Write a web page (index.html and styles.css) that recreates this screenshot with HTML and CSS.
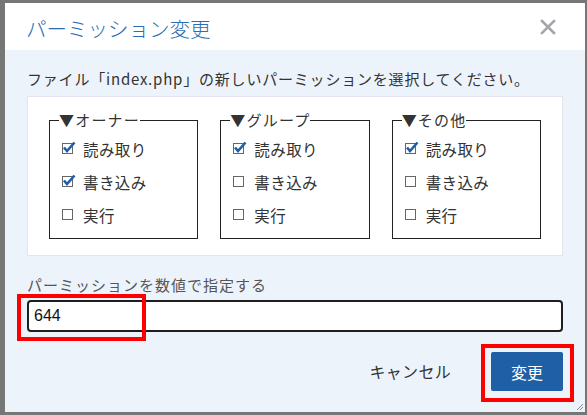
FILE: index.html
```html
<!DOCTYPE html>
<html lang="ja">
<head>
<meta charset="utf-8">
<link rel="stylesheet" href="styles.css">
</head>
<body>
<div class="page">
  <div class="dialog">
    <div class="header">
      <div class="title">パーミッション変更</div>
      <svg class="close" width="16" height="16" viewBox="0 0 16 16"><path d="M2 2 L14 14 M14 2 L2 14" stroke="#a3a5a8" stroke-width="2.6" stroke-linecap="square"/></svg>
    </div>
    <div class="content">
      <div class="desc">ファイル「index.php」の新しいパーミッションを選択してください。</div>
      <div class="panel">
        <fieldset class="group">
          <legend>▼オーナー</legend>
          <div class="row"><span class="cb on"><svg width="14" height="13" viewBox="0 0 14 13"><path d="M2 6.5 L5 10 L12.5 1.5" fill="none" stroke="#1d5ea8" stroke-width="2.6"/></svg></span>読み取り</div>
          <div class="row"><span class="cb on"><svg width="14" height="13" viewBox="0 0 14 13"><path d="M2 6.5 L5 10 L12.5 1.5" fill="none" stroke="#1d5ea8" stroke-width="2.6"/></svg></span>書き込み</div>
          <div class="row"><span class="cb"></span>実行</div>
        </fieldset>
        <fieldset class="group">
          <legend>▼グループ</legend>
          <div class="row"><span class="cb on"><svg width="14" height="13" viewBox="0 0 14 13"><path d="M2 6.5 L5 10 L12.5 1.5" fill="none" stroke="#1d5ea8" stroke-width="2.6"/></svg></span>読み取り</div>
          <div class="row"><span class="cb"></span>書き込み</div>
          <div class="row"><span class="cb"></span>実行</div>
        </fieldset>
        <fieldset class="group">
          <legend>▼その他</legend>
          <div class="row"><span class="cb on"><svg width="14" height="13" viewBox="0 0 14 13"><path d="M2 6.5 L5 10 L12.5 1.5" fill="none" stroke="#1d5ea8" stroke-width="2.6"/></svg></span>読み取り</div>
          <div class="row"><span class="cb"></span>書き込み</div>
          <div class="row"><span class="cb"></span>実行</div>
        </fieldset>
      </div>
      <div class="label">パーミッションを数値で指定する</div>
      <div class="input">644</div>
      <div class="actions">
        <div class="cancel">キャンセル</div>
        <div class="ok">変更</div>
      </div>
    </div>
    <svg class="grip" width="8" height="8" viewBox="0 0 8 8"><path d="M7 1 L1 7 M7 4 L4 7" stroke="#888" stroke-width="1"/></svg>
  </div>
  <div class="mark mark-input"></div>
  <div class="mark mark-ok"></div>
</div>
</body>
</html>
```
FILE: styles.css
```css
html, body {
  margin: 0;
  padding: 0;
}
body {
  background: #767676;
  font-family: "Noto Sans CJK JP", "Noto Sans", sans-serif;
  color: #333;
}
.page {
  position: relative;
  width: 587px;
  height: 415px;
  overflow: hidden;
  padding-top: 3px;
  box-sizing: border-box;
}
.dialog {
  position: relative;
  margin-left: 5px;
  width: 580px;
  height: 409px;
  background: #edf3fb;
  display: flex;
  flex-direction: column;
}
.header {
  height: 47px;
  background: #fff;
  display: flex;
  align-items: center;
  justify-content: space-between;
  padding: 0 29px 0 21px;
  box-sizing: border-box;
}
.title {
  font-size: 20.5px;
  color: #2a6db3;
  line-height: 28px;
  margin-top: 2px;
  font-weight: 300;
}
.close {
  display: block;
}
.content {
  padding: 18px 22px 0 22px;
  display: flex;
  flex-direction: column;
}
.desc {
  font-size: 15px;
  line-height: 22px;
  color: #333;
  letter-spacing: 0.8px;
  white-space: nowrap;
}
.panel {
  margin-top: 6px;
  background: #fff;
  border: 1px solid #e1e6ee;
  padding: 13px 21px 16px;
  display: flex;
  gap: 22px;
}
.group {
  flex: 1;
  margin: 0;
  border: 1px solid #222;
  padding: 2px 0 7px 12px;
  min-width: 0;
}
.group legend {
  padding: 0;
  margin-left: -3px;
  font-size: 15px;
  line-height: 20px;
  letter-spacing: 1.2px;
  color: #333;
}
.row {
  height: 33px;
  display: flex;
  align-items: center;
  font-size: 15.5px;
  letter-spacing: 0.4px;
  color: #333;
}
.cb {
  position: relative;
  width: 9px;
  height: 9px;
  border: 1px solid #666;
  background: #fff;
  margin-right: 10px;
  flex: none;
}
.cb svg {
  position: absolute;
  left: -1px;
  top: -3px;
}
.label {
  margin-top: 19px;
  font-size: 15px;
  line-height: 20px;
  letter-spacing: 1px;
  color: #555;
}
.input {
  margin-top: 5px;
  height: 32px;
  box-sizing: border-box;
  border: 2px solid #1e1e1e;
  border-radius: 4px;
  background: #fff;
  padding: 0 5px;
  display: flex;
  align-items: center;
  font-family: "Liberation Sans", Arial, sans-serif;
  font-size: 16px;
  color: #111;
}
.actions {
  margin-top: 20px;
  display: flex;
  justify-content: flex-end;
  align-items: center;
  gap: 20px;
}
.cancel {
  font-size: 16px;
  color: #333;
  padding: 0 20px;
  line-height: 39px;
  letter-spacing: 0.3px;
}
.ok {
  width: 72px;
  height: 39px;
  background: #1f5fa6;
  color: #fff;
  font-size: 16px;
  border-radius: 2px;
  display: flex;
  align-items: center;
  justify-content: center;
}
.grip {
  position: absolute;
  right: 1px;
  bottom: 1px;
}
.mark {
  position: absolute;
  border: 4px solid #f00;
  box-sizing: border-box;
}
.mark-input {
  left: 17px;
  top: 294px;
  width: 129px;
  height: 47px;
}
.mark-ok {
  left: 481px;
  top: 344px;
  width: 93px;
  height: 58px;
}
```
